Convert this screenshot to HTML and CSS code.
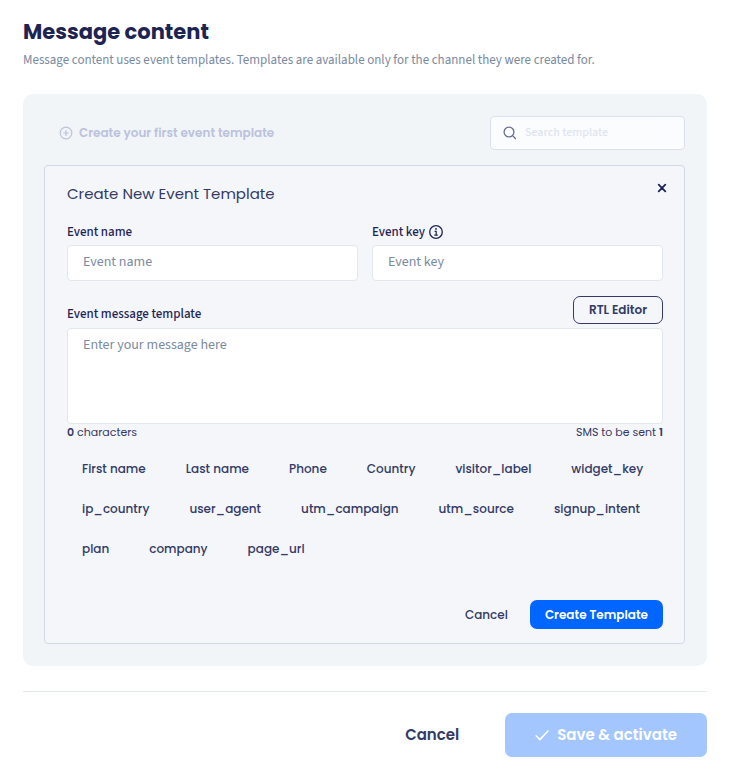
FILE: index.html
```html
<!DOCTYPE html>
<html lang="en">
<head>
<meta charset="utf-8">
<meta name="viewport" content="width=device-width, initial-scale=1">
<title>Message content</title>
<link rel="stylesheet" href="styles.css">
</head>
<body>
<main class="page">
  <header class="page-header">
    <h1 class="page-title">Message content</h1>
    <p class="page-subtitle">Message content uses event templates. Templates are available only for the channel they were created for.</p>
  </header>

  <section class="panel">
    <div class="toolbar">
      <button class="btn btn-add" type="button" disabled>
        <svg class="icon-add" viewBox="0 0 14 14" fill="none" stroke="currentColor" stroke-width="1.2" stroke-linecap="round" aria-hidden="true"><circle cx="7" cy="7" r="5.8"/><path d="M7 4.6v4.8M4.6 7h4.8"/></svg>
        Create your first event template
      </button>
      <label class="search">
        <svg class="icon-search" viewBox="0 0 14 14" fill="none" stroke="currentColor" stroke-width="1.3" stroke-linecap="round" aria-hidden="true"><circle cx="6" cy="6" r="4.9"/><path d="M9.6 9.6l2.8 2.9"/></svg>
        <input class="search-input" type="search" placeholder="Search template" aria-label="Search template">
      </label>
    </div>

    <form class="card">
      <div class="card-header">
        <h2 class="card-title">Create New Event Template</h2>
        <button class="close" type="button" aria-label="Close">
          <svg class="icon-close" viewBox="0 0 10 10" fill="none" stroke="currentColor" stroke-width="1.8" stroke-linecap="round" aria-hidden="true"><path d="M1.7 1.7l6.6 6.6M8.3 1.7l-6.6 6.6"/></svg>
        </button>
      </div>

      <div class="fields">
        <div class="field">
          <div class="label-row"><label class="label" for="event-name">Event name</label></div>
          <input class="input" id="event-name" type="text" placeholder="Event name">
        </div>
        <div class="field">
          <div class="label-row">
            <label class="label" for="event-key">Event key</label>
            <svg class="icon-info" viewBox="0 0 14 14" fill="none" stroke="currentColor" aria-hidden="true"><circle cx="7" cy="7" r="6.3" stroke-width="1.3"/><path d="M5.6 6.3h1.6v3.9M5.3 10.2h3.5" stroke-width="1.2"/><circle cx="7" cy="3.9" r=".9" fill="currentColor" stroke="none"/></svg>
          </div>
          <input class="input" id="event-key" type="text" placeholder="Event key">
        </div>
      </div>

      <div class="message-header">
        <label class="label" for="message">Event message template</label>
        <button class="btn btn-outline" type="button">RTL Editor</button>
      </div>
      <textarea class="input textarea" id="message" placeholder="Enter your message here"></textarea>
      <div class="counter">
        <span><b>0</b> characters</span>
        <span>SMS to be sent <b>1</b></span>
      </div>

      <div class="variables">
        <button class="btn chip" type="button">First name</button>
        <button class="btn chip" type="button">Last name</button>
        <button class="btn chip" type="button">Phone</button>
        <button class="btn chip" type="button">Country</button>
        <button class="btn chip" type="button">visitor_label</button>
        <button class="btn chip" type="button">widget_key</button>
        <button class="btn chip" type="button">ip_country</button>
        <button class="btn chip" type="button">user_agent</button>
        <button class="btn chip" type="button">utm_campaign</button>
        <button class="btn chip" type="button">utm_source</button>
        <button class="btn chip" type="button">signup_intent</button>
        <button class="btn chip" type="button">plan</button>
        <button class="btn chip" type="button">company</button>
        <button class="btn chip" type="button">page_url</button>
      </div>

      <div class="card-actions">
        <button class="btn chip" type="button">Cancel</button>
        <button class="btn btn-primary" type="submit">Create Template</button>
      </div>
    </form>
  </section>

  <footer class="page-actions">
    <button class="btn btn-large" type="button">Cancel</button>
    <button class="btn btn-large btn-save" type="button" disabled>
      <svg class="icon-check" viewBox="0 0 14 14" fill="none" stroke="currentColor" stroke-width="1.6" stroke-linecap="round" stroke-linejoin="round" aria-hidden="true"><path d="M1.2 7.8l3.6 3.8L12.8 3.2"/></svg>
      Save &amp; activate
    </button>
  </footer>
</main>
</body>
</html>
```

FILE: styles.css
```css
:root {
  --heading: Poppins, Inter, sans-serif;
  --body: "Source Sans 3", "Noto Sans CJK SC", sans-serif;
  --navy: #1e2452;
  --ink: #333a66;
  --muted: #7a8aa0;
}

* {
  box-sizing: border-box;
}

body {
  margin: 0;
  background: #fff;
  color: var(--ink);
  font-family: var(--body);
}

.page {
  padding: 16px 25px 14px 23px;
}

.page-title {
  margin: 0;
  color: var(--navy);
  font: 700 21px/32px var(--heading);
}

.page-subtitle {
  margin: 0;
  color: var(--muted);
  font-size: 13px;
  line-height: 24px;
}

.panel {
  margin-top: 22px;
  padding: 22px 22px 22px 21px;
  border-radius: 10px;
  background: #f1f5f8;
}

.toolbar {
  display: flex;
  justify-content: space-between;
  align-items: center;
  margin-bottom: 15px;
}

.btn {
  display: inline-flex;
  align-items: center;
  justify-content: center;
  height: 29px;
  padding: 0 15px;
  border: 0;
  border-radius: 7px;
  background: none;
  color: var(--ink);
  font: 600 12px/16px var(--heading);
  white-space: nowrap;
}

.btn-add {
  gap: 6px;
  color: #bbc2dc;
}

.icon-add,
.icon-search,
.icon-info,
.icon-check {
  flex: none;
  width: 14px;
  height: 14px;
}

.search {
  display: flex;
  align-items: center;
  gap: 8px;
  width: 195px;
  height: 34px;
  padding: 0 12px;
  border: 1px solid #dbe1ec;
  border-radius: 4px;
  background: #fbfcfe;
  color: #666d94;
}

.search-input {
  flex: 1;
  min-width: 0;
  padding: 0;
  border: 0;
  outline: 0;
  background: none;
  font: 500 12px/18px var(--body);
}

.search-input::placeholder {
  color: #dfe4ee;
}

.card {
  padding: 14px 21px 14px 22px;
  border: 1px solid #d1d9e8;
  border-radius: 4px;
  background: #f4f6fa;
}

.card-header {
  display: flex;
  justify-content: space-between;
}

.card-title {
  margin: 0;
  font: 400 15px/28px var(--heading);
}

.close {
  display: flex;
  width: 16px;
  height: 16px;
  margin-right: -7px;
  padding: 3px;
  border: 0;
  background: none;
  color: var(--navy);
}

.icon-close {
  width: 10px;
  height: 10px;
}

.fields {
  display: grid;
  grid-template-columns: 1fr 1fr;
  gap: 14px;
  margin-top: 13px;
}

.label-row {
  display: flex;
  align-items: center;
  gap: 4px;
  height: 22px;
  margin-bottom: 2px;
  color: var(--navy);
}

.label {
  color: var(--navy);
  font-size: 13px;
  font-weight: 500;
  line-height: 20px;
}

.input {
  display: block;
  width: 100%;
  height: 36px;
  padding: 0 15px 2px;
  border: 1px solid #e2e7ef;
  border-radius: 4px;
  background: #fff;
  color: var(--ink);
  font: 400 14px/20px var(--body);
}

.input::placeholder {
  color: var(--muted);
}

.message-header {
  display: flex;
  justify-content: space-between;
  align-items: flex-end;
  margin: 15px 0 4px;
}

.btn-outline {
  height: 28px;
  border: 1px solid var(--ink);
}

.textarea {
  height: 96px;
  padding-top: 6px;
  resize: none;
}

.counter {
  display: flex;
  justify-content: space-between;
  font: 400 11px/17px var(--heading);
}

.counter b {
  font-weight: 600;
}

.variables {
  display: flex;
  flex-wrap: wrap;
  gap: 11px 10px;
  margin-top: 13px;
}

.chip {
  font-weight: 500;
}

.card-actions {
  display: flex;
  justify-content: flex-end;
  gap: 7px;
  margin-top: 37px;
}

.btn-primary {
  background: #0066ff;
  color: #fff;
}

.page-actions {
  display: flex;
  justify-content: flex-end;
  gap: 16px;
  margin-top: 25px;
  padding-top: 21px;
  border-top: 1px solid #e2e7ef;
}

.btn-large {
  height: 44px;
  padding: 0 30px;
  font-size: 15px;
}

.btn-save {
  gap: 8px;
  background: #a3c6ff;
  color: #fff;
}
```
